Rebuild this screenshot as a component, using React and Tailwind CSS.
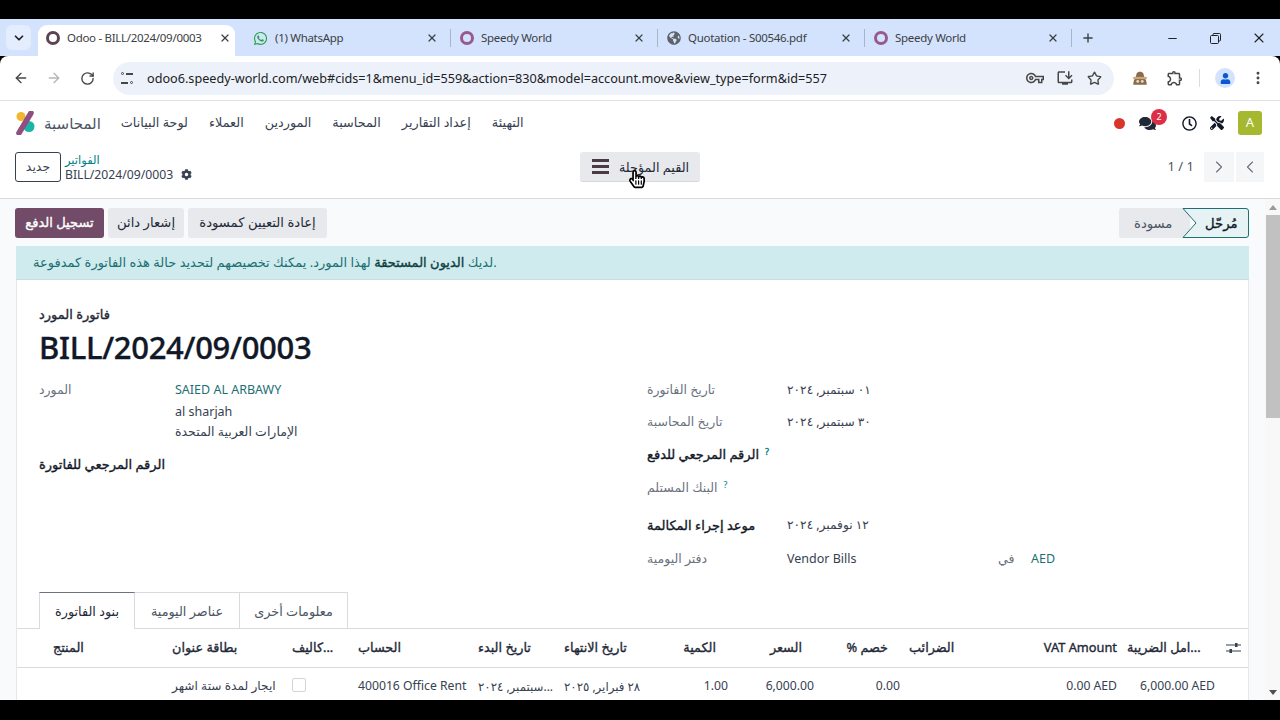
// App.jsx - Odoo vendor bill form inside a Chrome window
import {
  ArrowLeft,
  ArrowRight,
  RotateCw,
  Star,
  X,
  Plus,
  Minus,
  ChevronDown,
  ChevronLeft,
  ChevronRight,
  EllipsisVertical,
} from "lucide-react";
import {
  FaWhatsapp,
  FaGlobeAmericas,
  FaCog,
  FaComments,
  FaTools,
  FaRegClock,
  FaHandPointer,
  FaRegHandPointer,
  FaUser,
} from "react-icons/fa";
import { MdOutlineVpnKey, MdOutlineInstallDesktop, MdOutlineExtension } from "react-icons/md";

const FONT = "font-['Noto_Sans','DejaVu_Sans',sans-serif]";

// the Arabic fallback has a very wide bold, so headings get a thin stroke instead
const BOLD = "[-webkit-text-stroke:0.35px]";

const tabs = [
  { title: "Odoo - BILL/2024/09/0003", icon: "odoo-dark", active: true },
  { title: "(1) WhatsApp", icon: "whatsapp" },
  { title: "Speedy World", icon: "odoo" },
  { title: "Quotation - S00546.pdf", icon: "globe" },
  { title: "Speedy World", icon: "odoo" },
];

const navItems = ["لوحة البيانات", "العملاء", "الموردين", "المحاسبة", "إعداد التقارير", "التهيئة"];

// column widths add up to the 1233px of the card
const columns = "grid grid-cols-[155px_120px_66px_120px_86px_77px_87px_86px_86px_61px_156px_98px_35px]";

const TabIcon = ({ icon }) => {
  if (icon === "whatsapp") return <FaWhatsapp className="w-[15px] h-[15px] text-[#25a244]" />;
  if (icon === "globe") return <FaGlobeAmericas className="w-[14px] h-[14px] text-[#5f6368]" />;
  if (icon === "odoo-dark") return <span className="block w-[14px] h-[14px] rounded-full border-[3px] border-[#5b4554]" />;
  return <span className="block w-[14px] h-[14px] rounded-full border-[3px] border-[#98598c]" />;
};

const Tab = ({ tab, showDivider }) => (
  <div className="relative w-[207px] h-full flex items-end">
    <div className={`w-[197px] h-[31px] pl-[8px] pr-[4px] pb-[5px] flex items-center rounded-t-[9px] ${tab.active ? "bg-white" : ""}`}>
      <TabIcon icon={tab.icon} />
      <span className="ml-[7px] flex-1 truncate text-[11.5px] tracking-[-0.3px] text-[#3c4043]">{tab.title}</span>
      <X className="w-[12px] h-[12px] text-[#3c4043]" strokeWidth={2.4} />
    </div>
    {showDivider && <span className="absolute right-[1px] top-[10px] w-px h-[18px] bg-[#a9b5c9]" />}
  </div>
);

const ChromeBar = () => (
  <div className="h-[37px] bg-[#d3e3fd] flex">
    <div className="w-[38px] pl-[6px] pt-[6px]">
      <div className="w-[25px] h-[25px] rounded-md bg-[#e4edfd] flex items-center justify-center">
        <ChevronDown className="w-[14px] h-[14px] text-[#202124]" strokeWidth={3} />
      </div>
    </div>
    {tabs.map((tab, i) => (
      <Tab key={i} tab={tab} showDivider={i > 0} />
    ))}
    <Plus className="w-[14px] h-[14px] ml-[8px] mt-[12px] text-[#3c4043]" strokeWidth={2.4} />
    <Minus className="w-[13px] h-[13px] ml-[71px] mt-[13px] text-[#202124]" />
    <svg className="w-[13px] h-[13px] ml-[30px] mt-[13px] text-[#202124]" viewBox="0 0 13 13" fill="none" stroke="currentColor">
      <rect x="1.500" y="3.500" width="8" height="8" rx="1" />
      <path d="M4 3.500V2.500Q4 1.500 5 1.500H10.500Q11.500 1.500 11.500 2.500V8Q11.500 9 10.500 9H9.500" />
    </svg>
    <X className="w-[16px] h-[16px] ml-[29px] mt-[11px] text-[#202124]" strokeWidth={1.6} />
  </div>
);

const AddressBar = () => (
  <div className="h-[45px] bg-white border-b border-[#dfe1e5] flex items-center rounded-t-lg">
    <ArrowLeft className="ml-[13px] w-[16px] h-[16px] text-[#474747]" strokeWidth={2} />
    <ArrowRight className="ml-[17px] w-[16px] h-[16px] text-[#b4b6b9]" strokeWidth={2} />
    <RotateCw className="ml-[18px] w-[15px] h-[15px] text-[#474747]" strokeWidth={2.2} />
    <div className="ml-[18px] w-[1001px] h-[33px] rounded-full bg-[#edf2fa] flex items-center pl-[8px] pr-[12px]">
      <span className="w-[12px] h-[12px] flex flex-col justify-between">
        <span className="flex items-center gap-[2px]">
          <span className="w-[3px] h-[3px] rounded-full border border-[#474747]" />
          <span className="w-[7px] h-[2px] bg-[#474747]" />
        </span>
        <span className="flex items-center gap-[2px]">
          <span className="w-[7px] h-[2px] bg-[#474747]" />
          <span className="w-[3px] h-[3px] rounded-full border border-[#474747]" />
        </span>
      </span>
      <span className="ml-[14px] flex-1 text-[12.65px] text-[#202124] whitespace-nowrap">
        odoo6.speedy-world.com/web#cids=1&menu_id=559&action=830&model=account.move&view_type=form&id=557
      </span>
      <MdOutlineVpnKey className="w-[18px] h-[18px] text-[#474747]" />
      <MdOutlineInstallDesktop className="ml-[12px] w-[18px] h-[18px] text-[#474747]" />
      <Star className="ml-[13px] w-[15px] h-[15px] text-[#474747]" strokeWidth={2.2} />
    </div>
    <svg className="ml-[17px] w-[18px] h-[18px]" viewBox="0 0 16 16">
      <path d="M2 14c0-3 1-5 2-6l1-4c1-2 5-2 6 0l1 4c1 1 2 3 2 6z" fill="#8a6b4c" />
      <rect x="2" y="7" width="12" height="2" fill="#c9a77c" />
      <circle cx="6" cy="11" r="1.300" fill="#e8d9c0" />
      <circle cx="10" cy="11" r="1.300" fill="#e8d9c0" />
    </svg>
    <MdOutlineExtension className="ml-[17px] w-[18px] h-[18px] text-[#474747]" />
    <span className="ml-[15px] w-px h-[18px] bg-[#dadce0]" />
    <span className="ml-[15px] w-[20px] h-[20px] rounded-full bg-[#d3e3fd] flex items-center justify-center">
      <FaUser className="w-[11px] h-[11px] text-[#0b57d0]" />
    </span>
    <EllipsisVertical className="ml-[15px] w-[16px] h-[16px] text-[#474747]" strokeWidth={2.4} />
  </div>
);

const OdooLogo = () => (
  <svg className="w-[20px] h-[24px]" viewBox="0 0 20 24">
    <circle cx="14" cy="15.500" r="5.500" fill="#1ab5a6" />
    <circle cx="6" cy="5.500" r="4.500" fill="#f2b631" />
    <path d="M16 2 L4 22" stroke="#8f4f80" strokeWidth="5.500" strokeLinecap="round" />
  </svg>
);

const TopNav = () => (
  <div className="h-[44px] bg-white flex items-center">
    <div className="ml-[15px]">
      <OdooLogo />
    </div>
    <span className="ml-[9px] text-[15px] text-[#4b5563]">المحاسبة</span>
    <div className="ml-[20px] flex gap-[21px] text-[12.8px] text-[#374151]">
      {navItems.map((item) => (
        <span key={item}>{item}</span>
      ))}
    </div>
    <div className="ml-auto mr-[18px] flex items-center">
      <span className="w-[11px] h-[11px] rounded-full bg-[#d9362b]" />
      <span className="relative ml-[14px] w-[18px] h-[18px] flex items-center">
        <FaComments className="w-[17px] h-[17px] text-[#1f2937]" />
        <span className="absolute -top-[5px] left-[12px] w-[16px] h-[16px] rounded-full bg-[#dc2f45] text-white text-[9px] flex items-center justify-center">
          2
        </span>
      </span>
      <FaRegClock className="ml-[25px] w-[15px] h-[15px] text-[#111827]" />
      <FaTools className="ml-[13px] w-[14px] h-[14px] text-[#111827]" />
      <span className="ml-[14px] w-[24px] h-[24px] rounded-[3px] bg-[#a5b82f] text-white text-[13px] flex items-center justify-center">
        A
      </span>
    </div>
  </div>
);

const ControlPanel = () => (
  <div className="h-[54px] bg-white border-b border-[#d8dadd] flex items-start pt-[7px]">
    <button className="ml-[15px] w-[46px] h-[30px] border border-[#374151] rounded-[3px] text-[12.5px] text-[#374151]">
      جديد
    </button>
    <div className="ml-[4px] w-[515px] flex flex-col text-[12.2px] leading-[15px]">
      <span className="text-[#017e84] text-[11.5px]">الفواتير</span>
      <span className="text-[#374151] flex items-center">
        BILL/2024/09/0003
        <FaCog className="ml-[8px] w-[11px] h-[11px] text-[#374151]" />
      </span>
    </div>
    <button className="relative w-[120px] h-[30px] rounded-[3px] bg-[#e7e9ed] border-b border-[#d5d7db] flex items-center pl-[12px]">
      <span className="w-[17px] flex flex-col gap-[3px]">
        <span className="h-[3px] bg-[#4b3b47]" />
        <span className="h-[3px] bg-[#4b3b47]" />
        <span className="h-[3px] bg-[#4b3b47]" />
      </span>
      <span className="ml-[10px] pt-[3px] text-[12.8px] text-[#1f2937] whitespace-nowrap">القيم المؤجلة</span>
      <span className="absolute left-[49px] top-[16px] w-[16px] h-[22px]">
        <FaHandPointer className="absolute inset-0 w-[16px] h-[22px] text-white" />
        <FaRegHandPointer className="absolute inset-0 w-[16px] h-[22px] text-black" />
      </span>
    </button>
    <div className="ml-auto mr-[16px] flex items-center gap-[2px]">
      <span className="mr-[8px] text-[13px] text-[#4b5563]">1 / 1</span>
      <span className="w-[30px] h-[30px] bg-[#f5f6f7] flex items-center justify-center">
        <ChevronRight className="w-[20px] h-[20px] text-[#6b7280]" strokeWidth={1.4} />
      </span>
      <span className="w-[28px] h-[30px] bg-[#f5f6f7] flex items-center justify-center">
        <ChevronLeft className="w-[20px] h-[20px] text-[#6b7280]" strokeWidth={1.4} />
      </span>
    </div>
  </div>
);

const ActionRow = () => (
  <div className="h-[47px] pl-[15px] pr-[16px] pt-[9px] flex items-start">
    <button className={`w-[89px] h-[30px] rounded-[3px] bg-[#714b67] text-white text-[13px] ${BOLD}`}>تسجيل الدفع</button>
    <button className="ml-[4px] w-[76px] h-[30px] rounded-[3px] bg-[#e7e9ed] text-[#1f2937] text-[13.2px]">إشعار دائن</button>
    <button className="ml-[4px] w-[139px] h-[30px] rounded-[3px] bg-[#e7e9ed] text-[#1f2937] text-[13.2px]">إعادة التعيين كمسودة</button>
    <div className="ml-auto flex relative">
      <span className="w-[71px] h-[30px] rounded-l-[3px] bg-[#e7e9ed] pl-[15px] text-[13.2px] leading-[30px] text-[#4b5563]">مسودة</span>
      <span className={`relative w-[67px] -ml-[8px] h-[30px] pl-[23px] text-[13.2px] leading-[30px] text-[#111827] ${BOLD}`}>
        <svg className="absolute inset-0 w-[67px] h-[30px]" viewBox="0 0 67 30">
          <path d="M1 .5H64q2.500 0 2.500 2.500V27q0 2.500-2.500 2.500H1L14 15Z" fill="#e6f2f3" stroke="#1d6f73" />
        </svg>
        <span className="relative">مُرحّل</span>
      </span>
    </div>
  </div>
);

const Field = ({ label, bold, help, width, className, children }) => (
  <div className={`flex items-start ${className}`}>
    <span
      style={{ width }}
      className={`relative shrink-0 h-[20px] leading-[20px] whitespace-nowrap ${bold ? `text-[13px] text-[#111827] ${BOLD}` : "text-[12.5px] text-[#6b7280]"}`}
    >
      {label}
      {help && <sup className="ml-[6px] text-[9px] text-[#017e84]">?</sup>}
    </span>
    <div className="text-[12.2px] leading-[20px] text-[#374151]" dir="auto">{children}</div>
  </div>
);

const HeaderCell = ({ children, className = "" }) => (
  <div className={`text-[12.8px] text-[#1f2937] whitespace-nowrap ${BOLD} ${className}`}>{children}</div>
);

const LinesTable = () => (
  <div>
    <div className={`${columns} h-[39px] items-center border-b border-[#d8dadd]`}>
      <HeaderCell className="pl-[36px]">المنتج</HeaderCell>
      <HeaderCell>بطاقة عنوان</HeaderCell>
      <HeaderCell>كاليف...</HeaderCell>
      <HeaderCell>الحساب</HeaderCell>
      <HeaderCell>تاريخ البدء</HeaderCell>
      <HeaderCell>تاريخ الانتهاء</HeaderCell>
      <HeaderCell className="text-right pr-[12px]">الكمية</HeaderCell>
      <HeaderCell className="text-right pr-[12px]">السعر</HeaderCell>
      <HeaderCell className="text-right pr-[12px]">% خصم</HeaderCell>
      <HeaderCell className="pl-[9px]">الضرائب</HeaderCell>
      <HeaderCell className="text-right">VAT Amount</HeaderCell>
      <HeaderCell className="pl-[10px]">امل الضريبة...</HeaderCell>
      <div className="flex justify-end pr-[9px]">
        <svg className="w-[15px] h-[12px] text-[#374151]" viewBox="0 0 15 12" fill="currentColor">
          <rect y="2.500" width="15" height="1" />
          <rect y="8.500" width="15" height="1" />
          <rect x="9" y="1" width="2.500" height="4" />
          <rect x="3.500" y="7" width="2.500" height="4" />
        </svg>
      </div>
    </div>
    <div className={`${columns} h-[33px] pt-[4px] items-center text-[12.2px] text-[#374151] whitespace-nowrap`}>
      <div />
      <div>ايجار لمدة ستة اشهر</div>
      <div>
        <span className="block w-[14px] h-[14px] border border-[#d1d5db] rounded-[2px] -translate-y-[2px]" />
      </div>
      <div>400016 Office Rent</div>
      <div className="text-[11.8px]">سبتمبر, ٢٠٢٤...</div>
      <div className="text-[11.8px]">٢٨ فبراير, ٢٠٢٥</div>
      <div className="text-right">1.00</div>
      <div className="text-right">6,000.00</div>
      <div className="text-right">0.00</div>
      <div />
      <div className="text-right">0.00 AED</div>
      <div className="text-right">6,000.00 AED</div>
      <div />
    </div>
  </div>
);

const Sheet = () => (
  <div className="mx-[16px] bg-white border-x border-[#e5e7eb]">
    <div className="pl-[22px] pt-[24px] h-[100px]">
      <div className={`h-[20px] leading-[20px] text-[13px] text-[#1f2937] ${BOLD}`}>فاتورة المورد</div>
      <div className={`h-[47px] leading-[47px] text-[31px] tracking-[-0.3px] font-medium text-[#111827] ${BOLD}`}>BILL/2024/09/0003</div>
    </div>
    <div className="h-[212px] pl-[22px] flex">
      <div className="w-[608px]">
        <Field label="المورد" width="136px">
          <span className="text-[#1d6f73] text-[12.5px]">SAIED AL ARBAWY</span>
        </Field>
        <div className="ml-[136px] mt-[2px] text-[12.5px] leading-[20px] text-[#374151]">
          <div>al sharjah</div>
          <div>الإمارات العربية المتحدة</div>
        </div>
        <Field label="الرقم المرجعي للفاتورة" bold width="136px" className="mt-[12px]" />
      </div>
      <div>
        <Field label="تاريخ الفاتورة" width="140px">٠١ سبتمبر, ٢٠٢٤</Field>
        <Field label="تاريخ المحاسبة" width="140px" className="mt-[12px]">٣٠ سبتمبر, ٢٠٢٤</Field>
        <Field label="الرقم المرجعي للدفع" bold help width="140px" className="mt-[12px]" />
        <Field label="البنك المستلم" help width="140px" className="mt-[14px]" />
        <Field label="موعد إجراء المكالمة" bold width="140px" className="mt-[17px]">١٢ نوفمبر, ٢٠٢٤</Field>
        <Field label="دفتر اليومية" width="140px" className="mt-[14px]">
          <span className="flex text-[12.5px]">
            <span className="w-[211px]">Vendor Bills</span>
            <span className="w-[33px] text-[#6b7280]">في</span>
            <span className="text-[#1d6f73]">AED</span>
          </span>
        </Field>
      </div>
    </div>
    <div className="h-[37px] border-b border-[#d8dadd] flex pl-[22px]">
      <div className="w-[96px] h-[37px] bg-white border-x border-t border-[#d8dadd] border-t-[#6b7280] text-center leading-[37px] text-[12.8px] text-[#1f2937]">
        بنود الفاتورة
      </div>
      <div className="w-[105px] h-[36px] border-t border-r border-[#d8dadd] text-center leading-[36px] text-[12.8px] text-[#4b5563]">
        عناصر اليومية
      </div>
      <div className="w-[108px] h-[36px] border-t border-r border-[#d8dadd] text-center leading-[36px] text-[12.8px] text-[#4b5563]">
        معلومات أخرى
      </div>
    </div>
    <LinesTable />
  </div>
);

const Scrollbar = () => (
  <div className="w-[15px] h-full bg-[#f8f8f8] flex flex-col items-center">
    <span className="mt-[6px] w-0 h-0 border-x-[4px] border-x-transparent border-b-[5px] border-b-[#9a9a9a]" />
    <span className="mt-[5px] w-[14px] h-[203px] bg-[#c1c1c1]" />
    <span className="mt-auto mb-[5px] w-0 h-0 border-x-[4px] border-x-transparent border-t-[5px] border-t-[#505050]" />
  </div>
);

export default function App() {
  return (
    <div className={`w-[1280px] h-[720px] bg-black overflow-hidden pt-[19px] ${FONT}`}>
      <ChromeBar />
      <AddressBar />
      <TopNav />
      <ControlPanel />
      <div className="h-[501px] bg-[#f9fafb] flex overflow-hidden">
        <div className="w-[1265px]">
          <ActionRow />
          <div className="mx-[16px] h-[34px] bg-[#d0ebee] border-b border-[#c5e0e3] pl-[17px] text-[13px] leading-[33px] text-[#1d6f73] whitespace-nowrap">
            لديك <span className={`text-[#0f3f42] ${BOLD}`}>الديون المستحقة</span> لهذا المورد. يمكنك تخصيصهم لتحديد حالة هذه الفاتورة كمدفوعة.
          </div>
          <Sheet />
        </div>
        <Scrollbar />
      </div>
    </div>
  );
}
